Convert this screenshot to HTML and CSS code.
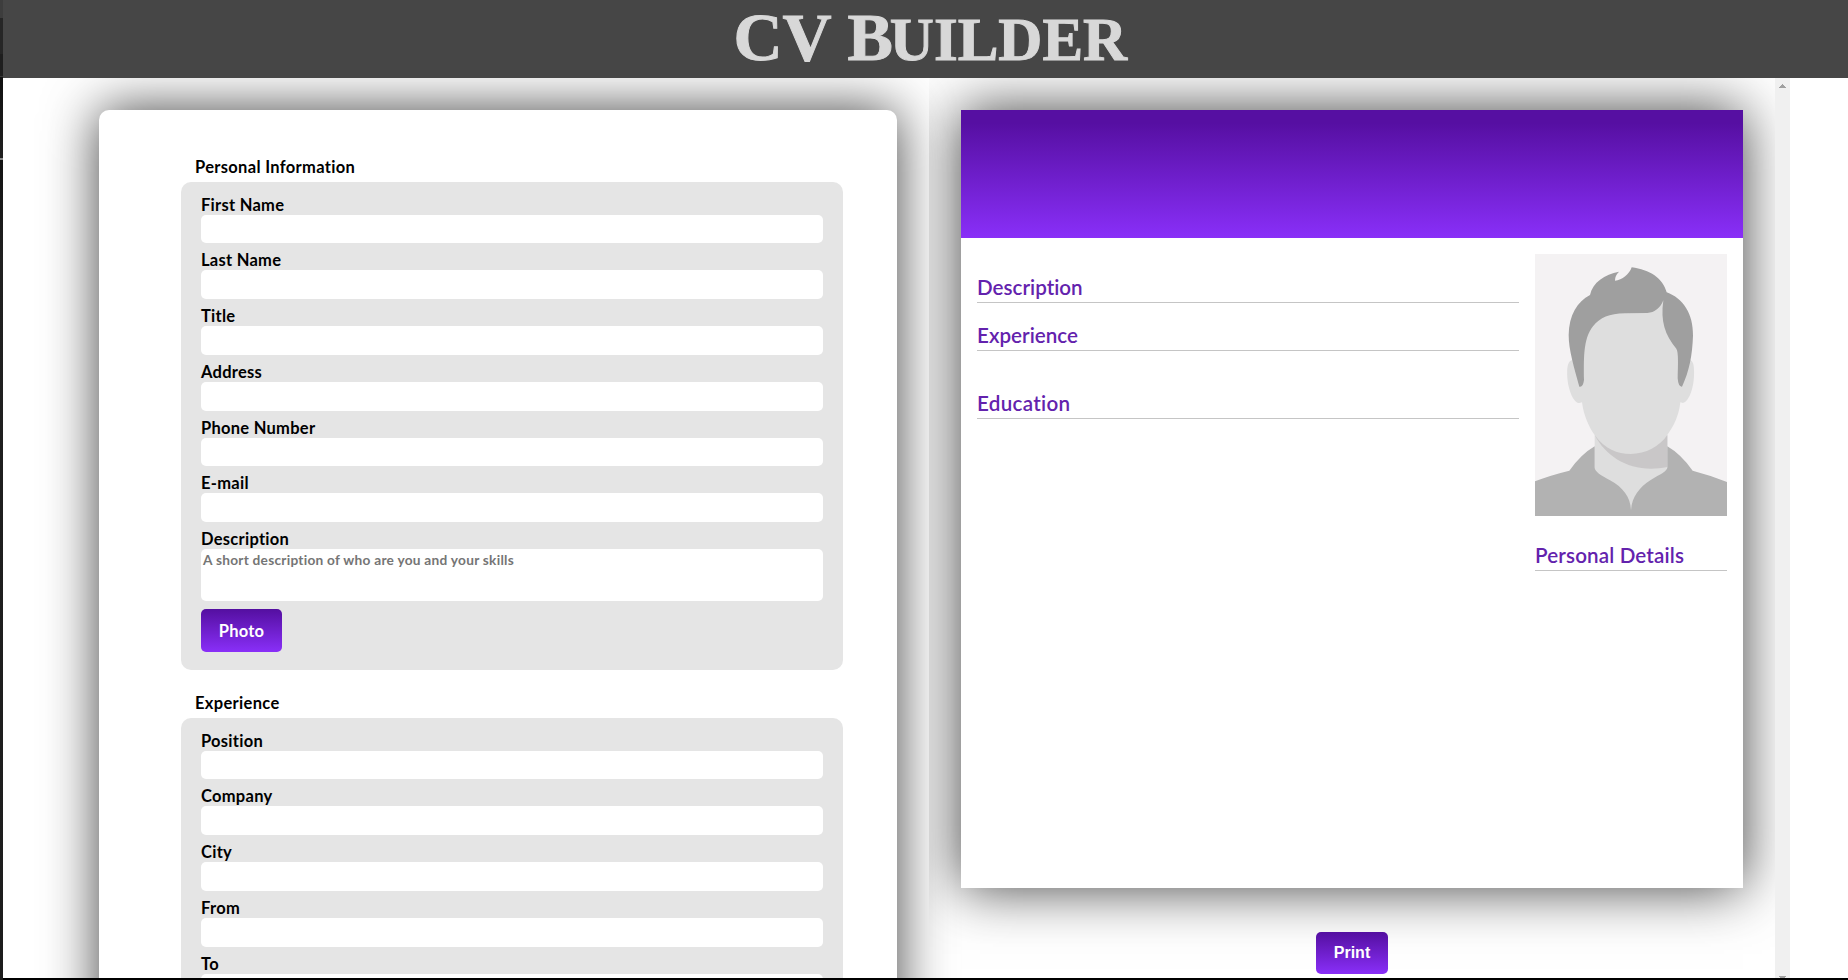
FILE: index.html
```html
<!DOCTYPE html>
<html lang="en">
<head>
<meta charset="utf-8">
<title>CV Builder</title>
<link rel="stylesheet" href="styles.css">
</head>
<body>
<div class="edge"></div>
<div class="app">
  <header class="header"><h1 class="logo">CV <span class="logo-b">B</span><span class="logo-small">UILDER</span></h1></header>
  <main class="main">
    <form class="form">
      <h2 class="form-title">Personal Information</h2>
      <section class="group">
        <label class="field"><span class="label">First Name</span><input class="input"></label>
        <label class="field"><span class="label">Last Name</span><input class="input"></label>
        <label class="field"><span class="label">Title</span><input class="input"></label>
        <label class="field"><span class="label">Address</span><input class="input"></label>
        <label class="field"><span class="label">Phone Number</span><input class="input"></label>
        <label class="field"><span class="label">E-mail</span><input class="input"></label>
        <label class="field"><span class="label">Description</span><textarea class="input area" placeholder="A short description of who are you and your skills"></textarea></label>
        <button type="button" class="button photo">Photo</button>
      </section>
      <h2 class="form-title">Experience</h2>
      <section class="group">
        <label class="field"><span class="label">Position</span><input class="input"></label>
        <label class="field"><span class="label">Company</span><input class="input"></label>
        <label class="field"><span class="label">City</span><input class="input"></label>
        <label class="field"><span class="label">From</span><input class="input"></label>
        <label class="field"><span class="label">To</span><input class="input"></label>
      </section>
    </form>
    <div class="pane">
      <div class="preview">
        <article class="cv">
          <div class="banner"></div>
          <div class="cv-body">
            <div class="cv-main">
              <h3 class="cv-title">Description</h3>
              <h3 class="cv-title">Experience</h3>
              <h3 class="cv-title spaced">Education</h3>
            </div>
            <aside class="cv-side">
              <svg class="avatar" viewBox="105 102 576 786" preserveAspectRatio="none">
                <rect x="105" y="102" width="576" height="786" fill="#f4f2f3"/>
                <path fill="#dedede" d="M217 420C203 422 200 445 202 473C205 510 220 548 238 549L246 547C251 586 266 620 284 645V760L392 888L502 760V645C522 617 537 586 541 547L549 549C567 545 581 506 582 466C583 440 581 425 571 420L490 235L270 260Z"/>
                <path fill="#c9c7c8" d="M284 645C315 688 352 702 392 702C438 701 478 680 502 645V741C400 761 323 718 284 645Z"/>
                <path fill="#b2b2b2" d="M105 784Q150 766 208 752Q244 702 284 679V742C284 756 303 766 330 781C370 803 392 832 393 872C395 832 417 803 451 781C482 762 502 754 502 742V679Q542 702 578 752Q632 766 681 786V888H105Z"/>
                <path fill="#9f9f9f" d="M238 500C222 441 206 390 206 345C207 286 232 244 270 225C278 187 314 163 357 155Q344 168 345 182C366 181 389 162 395 142C449 149 489 175 500 217C549 235 580 281 579 347C577 405 568 453 546 500Q535 501 533 475C534 435 536 397 529 386C495 345 481 305 490 241C481 264 464 278 442 279L375 280C326 281 302 292 279 319C248 357 252 423 252 480Q249 503 238 500Z"/>
              </svg>
              <h3 class="cv-title details">Personal Details</h3>
            </aside>
          </div>
        </article>
        <button type="button" class="button print">Print</button>
      </div>
      <div class="scrollbar">
        <svg class="arrow" viewBox="0 0 7 4"><path d="M0 4V3H1V2H2V1H3V0H4V1H5V2H6V3H7V4Z"/></svg>
        <svg class="arrow down" viewBox="0 0 7 4"><path d="M0 4V3H1V2H2V1H3V0H4V1H5V2H6V3H7V4Z"/></svg>
      </div>
    </div>
  </main>
</div>
</body>
</html>
```
FILE: styles.css
```css
* { box-sizing: border-box; }
body {
  margin: 0;
  height: 980px;
  display: flex;
  overflow: hidden;
  background: #fff;
  font-family: Lato, sans-serif;
  color: #000;
}
h1, h2, h3 { margin: 0; }
.edge {
  width: 3px;
  flex: none;
  background: linear-gradient(#3d3d3d 18px, #262626 18px, #262626 54px, #1e1e1e 54px, #1e1e1e 76px, #383838 76px, #383838 77px, #111 77px, #202020 158px, #888 158px, #888 160px, #131313 160px, #202020 260px, #1d1d1d);
}
.app {
  flex: 1;
  min-width: 0;
  height: 980px;
  display: flex;
  flex-direction: column;
  border-bottom: 2px solid #000;
}
.header {
  height: 78px;
  flex: none;
  display: flex;
  justify-content: center;
  background: #464646;
  position: relative;
  z-index: 1;
}
.logo {
  font: bold 68px/74px "Liberation Serif", serif;
  color: #d8d8d8;
  -webkit-text-stroke: 1px #d8d8d8;
  width: 392px;
  margin-left: 8px;
  white-space: nowrap;
}
.logo-b { letter-spacing: -3px; }
.logo-small { font-size: 61px; }
.main {
  flex: 1;
  min-height: 0;
  display: flex;
  overflow: hidden;
}
.form {
  width: 798px;
  height: 1600px;
  flex: none;
  margin: 32px 32px 0 96px;
  padding: 46px 54px 0 82px;
  border-radius: 10px;
  background: #fff;
  box-shadow: 0 0 54px rgba(0, 0, 0, .75);
}
.form-title {
  height: 20px;
  font-size: 16.5px;
  letter-spacing: .32px;
  line-height: 22px;
  padding-left: 14px;
  margin-bottom: 6px;
}
.group {
  border-radius: 10px;
  background: #e5e5e5;
  padding: 12.6px 20px 18px;
  margin-bottom: 21.6px;
}
.field { display: block; height: 55.75px; }
.field:has(.area) { height: 79.4px; }
.label {
  display: block;
  height: 20px;
  font-size: 16.5px;
  letter-spacing: .27px;
  font-weight: bold;
  line-height: 21px;
}
.input {
  display: block;
  width: 100%;
  height: 28.75px;
  border: 0;
  border-radius: 5px;
  background: #fff;
  padding: 2px;
}
.area {
  height: 52px;
  resize: none;
  font: bold 13.7px/18px Lato, sans-serif;
  letter-spacing: .26px;
}
.area::placeholder { color: #757575; }
.button {
  display: block;
  border: 0;
  border-radius: 5px;
  padding: 0;
  background: linear-gradient(#540fa0, #892ff8);
  color: #fff;
  font: bold 16.5px Lato, sans-serif;
}
.photo {
  width: 81px;
  height: 43px;
  margin-top: 1px;
  letter-spacing: .2px;
}
.pane {
  width: 861px;
  flex: none;
  display: flex;
  overflow: hidden;
}
.preview {
  width: 846px;
  padding: 32px;
  overflow: hidden;
}
.cv {
  height: 778px;
  background: #fff;
  box-shadow: 0 0 54px rgba(0, 0, 0, .75);
}
.banner {
  height: 128px;
  background: linear-gradient(#560fa2 10%, #892ff8);
}
.cv-body {
  display: flex;
  gap: 16px;
  padding: 16px;
}
.cv-main { width: 542px; padding-top: 16px; }
.cv-side { width: 192px; }
.cv-title {
  height: 33px;
  margin-bottom: 15px;
  border-bottom: 1px solid #c5c5c5;
  color: #6322ad;
  font: 600 20.6px/34px Lato, sans-serif;
  letter-spacing: 0.02px;
  white-space: nowrap;
}
.spaced { margin-top: 35px; letter-spacing: .3px; }
.avatar { display: block; width: 192px; height: 262px; }
.details { margin-top: 22px; letter-spacing: .15px; }
.print {
  width: 72px;
  height: 42px;
  margin: 44px auto 0;
  font: bold 16px "Liberation Sans", sans-serif;
}
.scrollbar {
  width: 15px;
  background: #f0f0f0;
  display: flex;
  flex-direction: column;
  justify-content: space-between;
  align-items: center;
  padding-top: 6px;
}
.arrow { width: 7px; height: 4px; fill: #a0a0a0; }
.down { transform: rotate(180deg); margin-bottom: -2px; }
```
